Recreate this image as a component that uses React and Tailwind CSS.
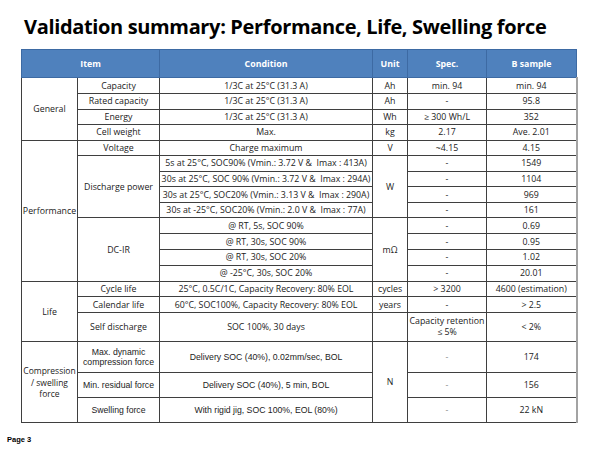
const cell = "border border-[#3f3f3f] text-center align-middle p-0";
const last = "border border-[#3f3f3f] border-r-2 border-r-[#a3a3a3] text-center align-middle p-0";
const head = "border border-[#3d6aa3] text-center align-middle p-0 font-bold text-white";
const alt = "font-['Liberation_Sans',Arial,sans-serif] text-[8.7px]";

const Row = ({ h, children }) => <tr className={h}>{children}</tr>;

export default function App() {
  return (
    <div className="w-[600px] h-[450px] bg-white flex flex-col text-[#222222] font-['Open_Sans','Noto_Sans_CJK_KR',sans-serif]">
      <h1 className="pl-[24px] pt-[13px] text-[20px] leading-[28px] font-bold text-black tracking-[-0.35px] whitespace-nowrap">
        Validation summary: Performance, Life, Swelling force
      </h1>

      <table className="ml-[21px] mt-[8px] w-[555px] table-fixed border-collapse text-[8.8px] leading-[10px]">
        <colgroup>
          <col className="w-[56px]" />
          <col className="w-[82px]" />
          <col className="w-[213px]" />
          <col className="w-[35px]" />
          <col className="w-[79px]" />
          <col className="w-[90px]" />
        </colgroup>
        <thead>
          <tr className="h-[28px] bg-[#4f81bd]">
            <th colSpan={2} className={head}>Item</th>
            <th className={head}>Condition</th>
            <th className={head}>Unit</th>
            <th className={head}>Spec.</th>
            <th className={head}>B sample</th>
          </tr>
        </thead>
        <tbody>
          {/* General */}
          <Row h="h-[16px]">
            <td rowSpan={4} className={cell}>General</td>
            <td className={cell}>Capacity</td>
            <td className={cell}>1/3C at 25°C (31.3 A)</td>
            <td className={cell}>Ah</td>
            <td className={cell}>min. 94</td>
            <td className={last}>min. 94</td>
          </Row>
          <Row h="h-[15.5px]">
            <td className={cell}>Rated capacity</td>
            <td className={cell}>1/3C at 25°C (31.3 A)</td>
            <td className={cell}>Ah</td>
            <td className={cell}>-</td>
            <td className={last}>95.8</td>
          </Row>
          <Row h="h-[15.5px]">
            <td className={cell}>Energy</td>
            <td className={cell}>1/3C at 25°C (31.3 A)</td>
            <td className={cell}>Wh</td>
            <td className={cell}>≥ 300 Wh/L</td>
            <td className={last}>352</td>
          </Row>
          <Row h="h-[15.5px]">
            <td className={cell}>Cell weight</td>
            <td className={cell}>Max.</td>
            <td className={cell}>kg</td>
            <td className={cell}>2.17</td>
            <td className={last}>Ave. 2.01</td>
          </Row>

          {/* Performance */}
          <Row h="h-[15.6px]">
            <td rowSpan={9} className={cell}>Performance</td>
            <td className={cell}>Voltage</td>
            <td className={cell}>Charge maximum</td>
            <td className={cell}>V</td>
            <td className={cell}>~4.15</td>
            <td className={last}>4.15</td>
          </Row>
          <Row h="h-[15.6px]">
            <td rowSpan={4} className={cell}>Discharge power</td>
            <td className={cell}>5s at 25°C, SOC90% (Vmin.: 3.72 V &amp;&nbsp; Imax : 413A)</td>
            <td rowSpan={4} className={cell}>W</td>
            <td className={cell}>-</td>
            <td className={last}>1549</td>
          </Row>
          <Row h="h-[15.6px]">
            <td className={cell}>30s at 25°C, SOC 90% (Vmin.: 3.72 V &amp;&nbsp; Imax : 294A)</td>
            <td className={cell}>-</td>
            <td className={last}>1104</td>
          </Row>
          <Row h="h-[15.6px]">
            <td className={cell}>30s at 25°C, SOC20% (Vmin.: 3.13 V &amp;&nbsp; Imax : 290A)</td>
            <td className={cell}>-</td>
            <td className={last}>969</td>
          </Row>
          <Row h="h-[15.6px]">
            <td className={cell}>30s at -25°C, SOC20% (Vmin.: 2.0 V &amp;&nbsp; Imax : 77A)</td>
            <td className={cell}>-</td>
            <td className={last}>161</td>
          </Row>
          <Row h="h-[15.8px]">
            <td rowSpan={4} className={cell}>DC-IR</td>
            <td className={cell}>@ RT, 5s, SOC 90%</td>
            <td rowSpan={4} className={cell}>mΩ</td>
            <td className={cell}>-</td>
            <td className={last}>0.69</td>
          </Row>
          <Row h="h-[15.8px]">
            <td className={cell}>@ RT, 30s, SOC 90%</td>
            <td className={cell}>-</td>
            <td className={last}>0.95</td>
          </Row>
          <Row h="h-[15.8px]">
            <td className={cell}>@ RT, 30s, SOC 20%</td>
            <td className={cell}>-</td>
            <td className={last}>1.02</td>
          </Row>
          <Row h="h-[15.8px]">
            <td className={cell}>@ -25°C, 30s, SOC 20%</td>
            <td className={cell}>-</td>
            <td className={last}>20.01</td>
          </Row>

          {/* Life */}
          <Row h="h-[15.6px]">
            <td rowSpan={3} className={cell}>Life</td>
            <td className={cell}>Cycle life</td>
            <td className={cell}>25°C, 0.5C/1C, Capacity Recovery: 80% EOL</td>
            <td className={cell}>cycles</td>
            <td className={cell}>&gt; 3200</td>
            <td className={last}>4600 (estimation)</td>
          </Row>
          <Row h="h-[15.6px]">
            <td className={cell}>Calendar life</td>
            <td className={cell}>60°C, SOC100%, Capacity Recovery: 80% EOL</td>
            <td className={cell}>years</td>
            <td className={cell}>-</td>
            <td className={last}>&gt; 2.5</td>
          </Row>
          <Row h="h-[29.5px]">
            <td className={cell}>Self discharge</td>
            <td className={cell}>SOC 100%, 30 days</td>
            <td className={cell}></td>
            <td className={`${cell} leading-[11.5px]`}>Capacity retention<br />≤ 5%</td>
            <td className={last}>&lt; 2%</td>
          </Row>

          {/* Compression / swelling force */}
          <Row h="h-[31px]">
            <td rowSpan={3} className={`${cell} text-[8.5px] leading-[11.5px]`}>
              Compression<br />/ swelling<br />force
            </td>
            <td className={`${cell} ${alt}`}>Max. dynamic<br />compression force</td>
            <td className={`${cell} ${alt}`}>Delivery SOC (40%), 0.02mm/sec, BOL</td>
            <td rowSpan={3} className={cell}>N</td>
            <td className={`${cell} text-[#8a8a8a]`}>-</td>
            <td className={last}>174</td>
          </Row>
          <Row h="h-[25px]">
            <td className={`${cell} ${alt}`}>Min. residual force</td>
            <td className={`${cell} ${alt}`}>Delivery SOC (40%), 5 min, BOL</td>
            <td className={`${cell} text-[#8a8a8a]`}>-</td>
            <td className={last}>156</td>
          </Row>
          <Row h="h-[25px]">
            <td className={`${cell} ${alt}`}>Swelling force</td>
            <td className={`${cell} ${alt}`}>With rigid jig, SOC 100%, EOL (80%)</td>
            <td className={`${cell} text-[#8a8a8a]`}>-</td>
            <td className={last}>22 kN</td>
          </Row>
        </tbody>
      </table>

      <p className="ml-[7px] mt-[12px] text-[7.5px] leading-[10px] font-bold text-black font-['Liberation_Sans',Arial,sans-serif]">
        Page 3
      </p>
    </div>
  );
}
